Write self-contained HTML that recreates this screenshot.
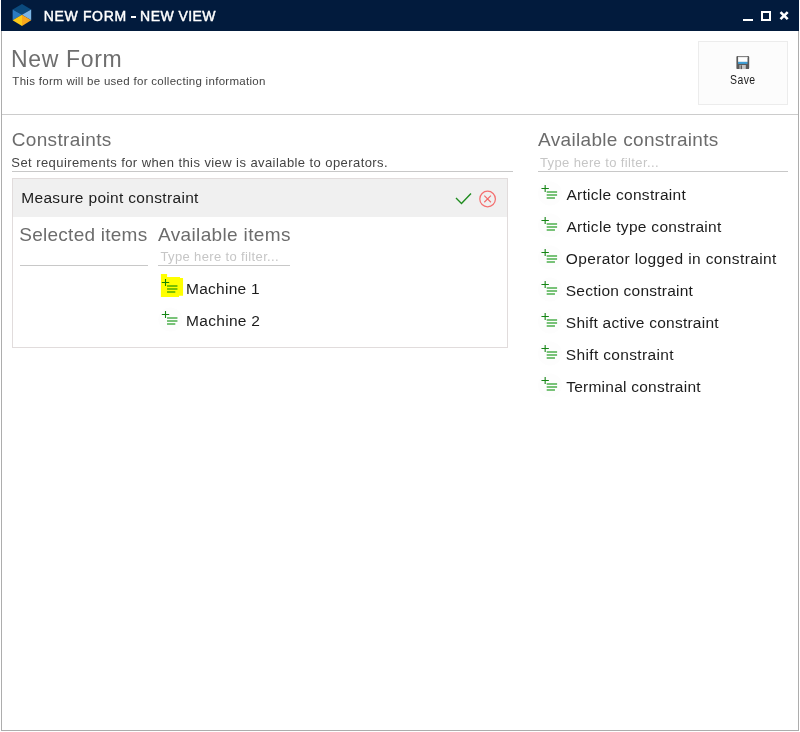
<!DOCTYPE html>
<html>
<head>
<meta charset="utf-8">
<style>
html,body{margin:0;padding:0;}
body{width:800px;height:732px;background:#fff;position:relative;overflow:hidden;font-family:"Liberation Sans",sans-serif;}
.abs{position:absolute;}
.t{position:absolute;white-space:nowrap;line-height:1;}
#wrap{position:absolute;left:0;top:0;width:800px;height:732px;will-change:transform;}
#frame{left:1px;top:0;width:798px;height:731px;border:1px solid #adadad;border-top:none;box-sizing:border-box;}
#titlebar{left:1px;top:0;width:798px;height:30.5px;background:#021b3d;}
</style>
</head>
<body>
<div class="abs" id="frame"></div>
<div class="abs" id="titlebar"></div>
<div id="wrap">
<svg class="abs" style="left:0;top:0" width="40" height="31" viewBox="0 0 40 31">
  <polygon points="22,4 31.2,9.4 22,14.8 12.6,9.4" fill="#0b4a7d"/>
  <polygon points="12.6,9.4 22,14.8 12.6,20.2" fill="#2c7bc0"/>
  <polygon points="31.2,9.4 22,14.8 31.2,20.2" fill="#7bb5e5"/>
  <polygon points="12.6,20.2 22,14.8 22,26" fill="#fcca18"/>
  <polygon points="31.2,20.2 22,14.8 22,26" fill="#f9a81c"/>
</svg>
<div class="abs" style="left:130.7px;top:16.3px;width:5.5px;height:1.8px;background:#fff;"></div>
<!-- window buttons -->
<div class="abs" style="left:743px;top:19px;width:10px;height:2px;background:#fff;"></div>
<div class="abs" style="left:761px;top:11px;width:10px;height:10px;border:2px solid #fff;box-sizing:border-box;"></div>
<svg class="abs" style="left:777px;top:9px" width="14" height="14" viewBox="0 0 14 14"><path d="M3.5 3.1 L10.7 10.1 M10.7 3.1 L3.5 10.1" stroke="#fff" stroke-width="2.6" fill="none" stroke-linecap="butt"/></svg>

<!-- header -->
<div class="abs" style="left:698px;top:41px;width:90px;height:64px;background:#fcfcfc;border:1px solid #ececec;box-sizing:border-box;"></div>
<svg class="abs" style="left:736px;top:55px" width="14" height="15" viewBox="0 0 14 15">
  <rect x="0.4" y="0.9" width="12.8" height="13.2" rx="1.2" fill="#5a5a5a"/>
  <rect x="2.1" y="1.85" width="9.4" height="5.05" fill="#fff"/>
  <rect x="2.1" y="1.85" width="9.4" height="0.9" fill="#e6e6e6"/>
  <rect x="2.1" y="6.9" width="9.4" height="2" fill="#3d9fd8"/>
  <rect x="3.5" y="10" width="6.3" height="4.1" fill="#c4c4c4"/>
  <rect x="4.65" y="10.3" width="1.3" height="3.8" fill="#555"/>
</svg>
<div class="abs" style="left:2px;top:114px;width:796px;height:1px;background:#cccccc;"></div>

<!-- Constraints -->
<div class="abs" style="left:12px;top:171px;width:501px;height:1px;background:#c8c8c8;"></div>
<div class="abs" style="left:12px;top:178px;width:496px;height:170px;border:1px solid #e1dcdc;box-sizing:border-box;background:#fff;"></div>
<div class="abs" style="left:13px;top:179px;width:494px;height:37.5px;background:#f0f0f0;"></div>
<svg class="abs" style="left:450px;top:186px" width="54" height="26" viewBox="0 0 54 26">
  <path d="M6 12 L11.5 17.5 L21 7.5" stroke="#1f8c1f" stroke-width="1.4" fill="none"/>
  <circle cx="37.6" cy="12.95" r="7.8" stroke="#f47070" stroke-width="1.25" fill="none"/>
  <path d="M34.3 9.65 L40.9 16.25 M40.9 9.65 L34.3 16.25" stroke="#f26a6a" stroke-width="1.15" fill="none"/>
</svg>
<div class="abs" style="left:20px;top:265px;width:128px;height:1px;background:#c8c8c8;"></div>
<div class="abs" style="left:158px;top:265px;width:132px;height:1px;background:#c8c8c8;"></div>
<svg class="abs" style="left:158px;top:272px" width="28" height="28" viewBox="0 0 28 28">
  <polygon points="2.90,1.90 9.10,1.90 9.10,5.00 22.00,5.00 22.00,6.00 25.05,6.00 25.05,23.80 21.00,23.80 21.00,25.05 2.90,25.05" fill="#ffff00"/>
</svg>
<div class="abs" style="left:538px;top:171px;width:250px;height:1px;background:#c8c8c8;"></div>

<svg class="abs" style="left:157px;top:274px" width="26" height="26" viewBox="0 0 26 26"><g transform="translate(0.35 0)"><path d="M4.45 8.5 H11.85 M8.16 4.9 V11.9" stroke="#158500" stroke-width="1.1" fill="none"/><path d="M9.7 12 H20.1 M9.7 15 H20.1 M9.7 18 H17.96" stroke="#7cc000" stroke-width="1.85" fill="none"/></g></svg>
<svg class="abs" style="left:157px;top:306px" width="26" height="26" viewBox="0 0 26 26"><g transform="translate(0.35 0)"><circle cx="12.96" cy="13.5" r="12" fill="#fdfdfd"/><path d="M4.45 8.5 H11.85 M8.16 4.9 V11.9" stroke="#158515" stroke-width="1.1" fill="none"/><path d="M9.7 12 H20.1 M9.7 15 H20.1 M9.7 18 H17.96" stroke="#78c278" stroke-width="1.85" fill="none"/></g></svg>
<svg class="abs" style="left:537px;top:180px" width="26" height="26" viewBox="0 0 26 26"><g transform="translate(0 0)"><circle cx="12.96" cy="13.5" r="12" fill="#fdfdfd"/><path d="M4.45 8.5 H11.85 M8.16 4.9 V11.9" stroke="#158515" stroke-width="1.1" fill="none"/><path d="M9.7 12 H20.1 M9.7 15 H20.1 M9.7 18 H17.96" stroke="#78c278" stroke-width="1.85" fill="none"/></g></svg>
<svg class="abs" style="left:537px;top:212px" width="26" height="26" viewBox="0 0 26 26"><g transform="translate(0 0)"><circle cx="12.96" cy="13.5" r="12" fill="#fdfdfd"/><path d="M4.45 8.5 H11.85 M8.16 4.9 V11.9" stroke="#158515" stroke-width="1.1" fill="none"/><path d="M9.7 12 H20.1 M9.7 15 H20.1 M9.7 18 H17.96" stroke="#78c278" stroke-width="1.85" fill="none"/></g></svg>
<svg class="abs" style="left:537px;top:244px" width="26" height="26" viewBox="0 0 26 26"><g transform="translate(0 0)"><circle cx="12.96" cy="13.5" r="12" fill="#fdfdfd"/><path d="M4.45 8.5 H11.85 M8.16 4.9 V11.9" stroke="#158515" stroke-width="1.1" fill="none"/><path d="M9.7 12 H20.1 M9.7 15 H20.1 M9.7 18 H17.96" stroke="#78c278" stroke-width="1.85" fill="none"/></g></svg>
<svg class="abs" style="left:537px;top:276px" width="26" height="26" viewBox="0 0 26 26"><g transform="translate(0 0)"><circle cx="12.96" cy="13.5" r="12" fill="#fdfdfd"/><path d="M4.45 8.5 H11.85 M8.16 4.9 V11.9" stroke="#158515" stroke-width="1.1" fill="none"/><path d="M9.7 12 H20.1 M9.7 15 H20.1 M9.7 18 H17.96" stroke="#78c278" stroke-width="1.85" fill="none"/></g></svg>
<svg class="abs" style="left:537px;top:308px" width="26" height="26" viewBox="0 0 26 26"><g transform="translate(0 0)"><circle cx="12.96" cy="13.5" r="12" fill="#fdfdfd"/><path d="M4.45 8.5 H11.85 M8.16 4.9 V11.9" stroke="#158515" stroke-width="1.1" fill="none"/><path d="M9.7 12 H20.1 M9.7 15 H20.1 M9.7 18 H17.96" stroke="#78c278" stroke-width="1.85" fill="none"/></g></svg>
<svg class="abs" style="left:537px;top:340px" width="26" height="26" viewBox="0 0 26 26"><g transform="translate(0 0)"><circle cx="12.96" cy="13.5" r="12" fill="#fdfdfd"/><path d="M4.45 8.5 H11.85 M8.16 4.9 V11.9" stroke="#158515" stroke-width="1.1" fill="none"/><path d="M9.7 12 H20.1 M9.7 15 H20.1 M9.7 18 H17.96" stroke="#78c278" stroke-width="1.85" fill="none"/></g></svg>
<svg class="abs" style="left:537px;top:372px" width="26" height="26" viewBox="0 0 26 26"><g transform="translate(0 0)"><circle cx="12.96" cy="13.5" r="12" fill="#fdfdfd"/><path d="M4.45 8.5 H11.85 M8.16 4.9 V11.9" stroke="#158515" stroke-width="1.1" fill="none"/><path d="M9.7 12 H20.1 M9.7 15 H20.1 M9.7 18 H17.96" stroke="#78c278" stroke-width="1.85" fill="none"/></g></svg>
<div class="t" id="tA" style="left:43.76px;top:9px;font-size:14px;color:#fff;letter-spacing:0.650px;-webkit-text-stroke:0.45px #fff;">NEW FORM</div>
<div class="t" id="tB" style="left:140.09px;top:9px;font-size:14px;color:#fff;letter-spacing:0.437px;-webkit-text-stroke:0.45px #fff;">NEW VIEW</div>
<div class="t" id="h1" style="left:11.08px;top:48px;font-size:23px;color:#6e6e6e;letter-spacing:0.647px;">New Form</div>
<div class="t" id="sub" style="left:12.37px;top:76px;font-size:11.5px;color:#444;letter-spacing:0.292px;">This form will be used for collecting information</div>
<div class="t" id="save" style="left:730.32px;top:74px;font-size:12px;color:#1c1c1c;letter-spacing:0.504px;transform:scaleX(0.87);transform-origin:0 0;">Save</div>
<div class="t" id="c1" style="left:11.72px;top:130px;font-size:19px;color:#6c6c6c;letter-spacing:0.344px;">Constraints</div>
<div class="t" id="c2" style="left:11.37px;top:156px;font-size:13px;color:#444;letter-spacing:0.423px;">Set requirements for when this view is available to operators.</div>
<div class="t" id="mp" style="left:21.25px;top:190px;font-size:15.5px;color:#1c1c1c;letter-spacing:0.323px;">Measure point constraint</div>
<div class="t" id="si" style="left:19.32px;top:225px;font-size:19px;color:#6c6c6c;letter-spacing:0.251px;">Selected items</div>
<div class="t" id="ai" style="left:158.08px;top:225px;font-size:19px;color:#6c6c6c;letter-spacing:0.349px;">Available items</div>
<div class="t" id="f1" style="left:160.45px;top:250px;font-size:13px;color:#c6c6c6;letter-spacing:0.366px;">Type here to filter...</div>
<div class="t" id="ac" style="left:538.10px;top:130px;font-size:19px;color:#6c6c6c;letter-spacing:0.315px;">Available constraints</div>
<div class="t" id="f2" style="left:539.94px;top:156px;font-size:13px;color:#c6c6c6;letter-spacing:0.384px;">Type here to filter...</div>
<div class="t" id="r0" style="left:186.01px;top:281px;font-size:15.5px;color:#1c1c1c;letter-spacing:0.274px;">Machine 1</div>
<div class="t" id="r1" style="left:186.01px;top:313px;font-size:15.5px;color:#1c1c1c;letter-spacing:0.308px;">Machine 2</div>
<div class="t" id="r2" style="left:566.38px;top:187px;font-size:15.5px;color:#1c1c1c;letter-spacing:0.283px;">Article constraint</div>
<div class="t" id="r3" style="left:566.38px;top:219px;font-size:15.5px;color:#1c1c1c;letter-spacing:0.309px;">Article type constraint</div>
<div class="t" id="r4" style="left:565.82px;top:251px;font-size:15.5px;color:#1c1c1c;letter-spacing:0.379px;">Operator logged in constraint</div>
<div class="t" id="r5" style="left:565.82px;top:283px;font-size:15.5px;color:#1c1c1c;letter-spacing:0.222px;">Section constraint</div>
<div class="t" id="r6" style="left:565.82px;top:315px;font-size:15.5px;color:#1c1c1c;letter-spacing:0.248px;">Shift active constraint</div>
<div class="t" id="r7" style="left:565.82px;top:347px;font-size:15.5px;color:#1c1c1c;letter-spacing:0.343px;">Shift constraint</div>
<div class="t" id="r8" style="left:566.21px;top:379px;font-size:15.5px;color:#1c1c1c;letter-spacing:0.238px;">Terminal constraint</div>
</div>
</body>
</html>
